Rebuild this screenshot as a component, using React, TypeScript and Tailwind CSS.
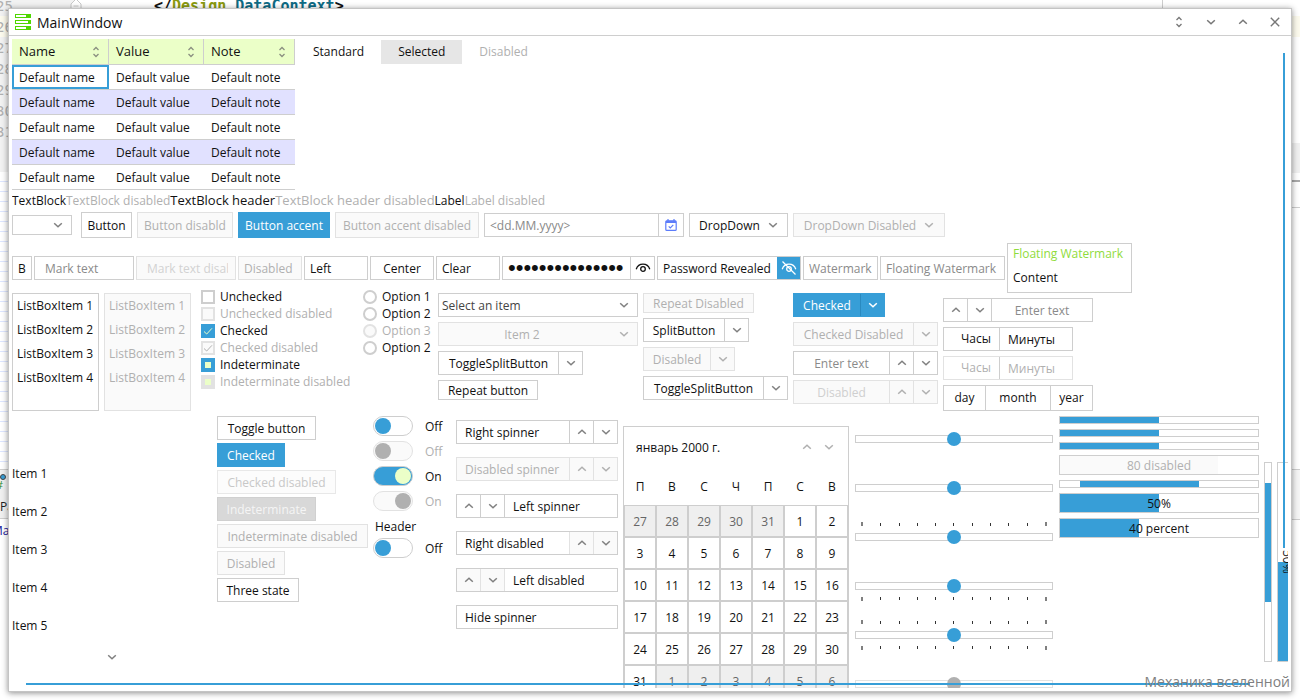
import React from "react";

type Item = { text: string; disabled?: boolean };

const box = "border border-[#cecece] bg-white";
const boxDisabled = "border border-[#e2e2e2] bg-[#fafafa] text-[#b0b0b0]";
const boxAccent = "border border-[#379ed7] bg-[#379ed7] text-white font-medium";

const Chevron: React.FC<{ up?: boolean; className?: string }> = ({ up, className = "" }) => (
    <svg
        className={`w-[10px] h-[10px] shrink-0 ${className}`}
        viewBox="0 0 10 10"
        fill="none"
        stroke="currentColor"
        strokeWidth={1.5}
    >
        <path d={up ? "M1.2 6.8L5 3.2l3.8 3.6" : "M1.2 3.2L5 6.8l3.8-3.6"} />
    </svg>
);

const SortIcon: React.FC<{ className?: string }> = ({ className = "" }) => (
    <svg className={`w-2 h-3 ${className}`} viewBox="0 0 8 12" fill="none" stroke="currentColor" strokeWidth={1.3}>
        <path d="M1.5 4L4 1.5 6.5 4M1.5 8L4 10.5 6.5 8" />
    </svg>
);

const Logo: React.FC = () => (
    <svg className="w-4 h-4" viewBox="0 0 16 16" fill="#4fd600">
        <path d="M0 0h16v4H0zM1 1v2h10V1z" fillRule="evenodd" />
        <path d="M0 6h16v4H0zM1 7v2h12V7z" fillRule="evenodd" />
        <path d="M0 12h16v4H0zM1 13v2h10v-2z" fillRule="evenodd" />
    </svg>
);

const Eye: React.FC<{ off?: boolean }> = ({ off }) => (
    <svg className="w-4 h-4" viewBox="0 0 16 16" fill="none" stroke="currentColor" strokeWidth={1.3}>
        <path d="M1.2 9.2C2.4 5.800 5 4.200 8 4.200s5.600 1.600 6.800 5" />
        <circle cx="8" cy="9" r="2.300" />
        {off && <path d="M1.500 1.500l13 13" />}
    </svg>
);

const CalendarIcon: React.FC = () => (
    <svg className="w-3 h-3" viewBox="0 0 12 12" fill="none" stroke="#5c7cfa" strokeWidth={1.2}>
        <rect x="0.8" y="1.800" width="10.400" height="9.600" rx="1" />
        <path d="M1 2.900h10" strokeWidth={2.200} />
        <path d="M3 0v2M9 0v2M3.700 7.300l1.600 1.600 3-3" />
    </svg>
);

const Btn: React.FC<{ children: React.ReactNode; look?: string; className?: string; disabled?: boolean }> = ({
    children,
    look,
    className = "",
    disabled,
}) => (
    <button
        type="button"
        disabled={disabled}
        className={`shrink-0 flex items-center justify-center ${look ?? (disabled ? boxDisabled : box)} ${className}`}
    >
        {children}
    </button>
);

const SplitButton: React.FC<{ text: string; className: string; accent?: boolean; disabled?: boolean }> = ({
    text,
    className,
    accent,
    disabled,
}) => (
    <div className={`flex h-6 ${accent ? boxAccent : disabled ? boxDisabled : box} ${className}`}>
        <button type="button" disabled={disabled} className="flex-1">
            {text}
        </button>
        <button
            type="button"
            disabled={disabled}
            aria-label={`${text} menu`}
            className={`w-6 flex items-center justify-center border-l ${
                accent ? "border-[#2a8ac0] text-white" : disabled ? "border-[#e2e2e2]" : "border-[#cecece] text-[#808080]"
            }`}
        >
            <Chevron />
        </button>
    </div>
);

type SpinnerProps = {
    label: string;
    value?: string;
    placeholder?: string;
    left?: boolean;
    disabled?: boolean;
    lockButtons?: boolean;
    noButtons?: boolean;
    className: string;
    inputClass?: string;
};

const Spinner: React.FC<SpinnerProps> = (p) => {
    const locked = p.disabled || p.lockButtons;
    const side = p.left ? "border-r" : "border-l";
    const look = locked ? "border-[#e2e2e2] bg-[#fafafa]" : "border-[#cecece]";
    const color = p.disabled ? "text-[#b0b0b0]" : "text-[#808080]";
    const buttons = !p.noButtons && (
        <div className={`flex ${color}`}>
            <button type="button" disabled={locked} aria-label="Increase" className={`w-6 grid place-items-center ${side} ${look}`}>
                <Chevron up />
            </button>
            <button type="button" disabled={locked} aria-label="Decrease" className={`w-6 grid place-items-center ${side} ${look}`}>
                <Chevron />
            </button>
        </div>
    );

    return (
        <div className={`flex h-6 ${p.disabled ? boxDisabled : box} ${p.className}`}>
            {p.left && buttons}
            <input
                type="text"
                aria-label={p.label}
                defaultValue={p.value}
                placeholder={p.placeholder}
                disabled={p.disabled}
                className={`flex-1 min-w-0 px-2 outline-none placeholder:text-[#8a8a8a] disabled:placeholder:text-[#cfcfcf] ${p.inputClass ?? ""}`}
            />
            {!p.left && buttons}
        </div>
    );
};

const TextInput: React.FC<{ label: string; value?: string; placeholder?: string; disabled?: boolean; className: string }> = ({
    label,
    value,
    placeholder,
    disabled,
    className,
}) => (
    <input
        type="text"
        aria-label={label}
        defaultValue={value}
        placeholder={placeholder}
        disabled={disabled}
        className={`shrink-0 h-6 outline-none placeholder:text-[#8a8a8a] disabled:placeholder:text-[#d2d2d2] ${
            disabled ? boxDisabled : box
        } ${className}`}
    />
);

const Select: React.FC<{ label: string; option: string; disabled?: boolean; className: string; selectClass?: string }> = ({
    label,
    option,
    disabled,
    className,
    selectClass = "",
}) => (
    <div className={`relative ${disabled ? boxDisabled : box} ${className}`}>
        <select
            aria-label={label}
            disabled={disabled}
            className={`appearance-none w-full h-full outline-none opacity-100 ${selectClass}`}
        >
            <option>{option}</option>
        </select>
        <Chevron className={`absolute right-2 inset-y-0 my-auto pointer-events-none ${disabled ? "" : "text-[#808080]"}`} />
    </div>
);

const Check: React.FC<{ text: string; state: "off" | "on" | "mixed"; disabled?: boolean }> = ({ text, state, disabled }) => {
    let look = disabled ? "border-2 border-[#e2e2e2] bg-[#fafafa]" : "border-2 border-[#cecece] bg-white";
    if (state !== "off" && !disabled) look = "bg-[#379ed7]";
    if (state === "mixed" && disabled) look = "bg-[#e2e2e2]";

    return (
        <label className={`flex items-center gap-[5px] h-[17px] ${disabled ? "text-[#b0b0b0]" : ""}`}>
            <span className="relative grid w-[14px] h-[14px]">
                <input
                    type="checkbox"
                    defaultChecked={state === "on"}
                    disabled={disabled}
                    ref={(el) => {
                        if (el) el.indeterminate = state === "mixed";
                    }}
                    className={`appearance-none w-[14px] h-[14px] ${look}`}
                />
                {state === "on" && (
                    <svg
                        className="absolute inset-0 pointer-events-none"
                        viewBox="0 0 14 14"
                        fill="none"
                        stroke={disabled ? "#b0b0b0" : "#ebffc8"}
                        strokeWidth={1}
                    >
                        <path d="M3 7.500l2.700 2.500L11 4.300" />
                    </svg>
                )}
                {state === "mixed" && <span className="absolute inset-1 bg-[#ebffc8] pointer-events-none" />}
            </span>
            {text}
        </label>
    );
};

const Radio: React.FC<Item> = ({ text, disabled }) => (
    <label className={`flex items-center gap-[5px] h-[17px] ${disabled ? "text-[#b0b0b0]" : ""}`}>
        <input
            type="radio"
            name="options"
            disabled={disabled}
            className={`appearance-none w-[14px] h-[14px] rounded-full border-2 ${
                disabled ? "border-[#e2e2e2] bg-[#fafafa]" : "border-[#cecece] bg-white"
            }`}
        />
        {text}
    </label>
);

const Switch: React.FC<{ on?: boolean; disabled?: boolean }> = ({ on, disabled }) => {
    const track = disabled ? "border-[#e2e2e2] bg-[#fafafa]" : on ? "border-[#cecece] bg-[#379ed7]" : "border-[#cecece] bg-white";
    const knob = disabled ? "bg-[#b0b0b0]" : on ? "bg-[#ebffc8]" : "bg-[#379ed7]";

    return (
        <label className={`flex items-center gap-3 h-5 ${disabled ? "text-[#b0b0b0]" : ""}`}>
            <span className="relative flex">
                <input
                    type="checkbox"
                    role="switch"
                    defaultChecked={on}
                    disabled={disabled}
                    className={`appearance-none w-10 h-5 rounded-full border ${track}`}
                />
                <span className={`absolute top-[2px] w-4 h-4 rounded-full pointer-events-none ${on ? "right-[2px]" : "left-[2px]"} ${knob}`} />
            </span>
            {on ? "On" : "Off"}
        </label>
    );
};

const Ticks: React.FC<{ show?: boolean; below?: boolean }> = ({ show, below }) => (
    <div className={`flex justify-between h-1 px-[6px] ${below ? "items-start" : "items-end"}`}>
        {show &&
            Array.from({ length: 11 }, (_, i) => (
                <span key={i} className={i % 10 === 0 ? "w-[2px] h-1 bg-[#808080]" : "w-px h-[3px] bg-[#333]"} />
            ))}
    </div>
);

const Slider: React.FC<{ above?: boolean; below?: boolean; disabled?: boolean }> = ({ above, below, disabled }) => (
    <div className="flex flex-col gap-1 h-[49px] pt-[9px]">
        <Ticks show={above} />
        <input
            type="range"
            aria-label="Slider"
            defaultValue={50}
            disabled={disabled}
            className="appearance-none w-full h-[14px] shrink-0 bg-transparent [&::-webkit-slider-runnable-track]:h-2 [&::-webkit-slider-runnable-track]:border [&::-webkit-slider-runnable-track]:border-[#cecece] disabled:[&::-webkit-slider-runnable-track]:border-[#e2e2e2] [&::-webkit-slider-thumb]:appearance-none [&::-webkit-slider-thumb]:w-[14px] [&::-webkit-slider-thumb]:h-[14px] [&::-webkit-slider-thumb]:-mt-1 [&::-webkit-slider-thumb]:rounded-full [&::-webkit-slider-thumb]:bg-[#379ed7] disabled:[&::-webkit-slider-thumb]:bg-[#b0b0b0]"
        />
        <Ticks show={below} below />
    </div>
);

const Progress: React.FC<{ value: number; offset?: number; text?: string; disabled?: boolean }> = ({
    value,
    offset = 0,
    text,
    disabled,
}) => (
    <div
        role="progressbar"
        aria-valuenow={value}
        className={`relative ${box} ${text ? "h-5" : "h-2"} ${disabled ? "text-[#b0b0b0]" : ""}`}
    >
        <div
            className={`h-full ${disabled ? "bg-[#fafafa]" : "bg-[#379ed7]"}`}
            style={{ width: `${value}%`, marginLeft: `${offset}%` }}
        />
        {text && <span className="absolute inset-0 flex items-center justify-center">{text}</span>}
    </div>
);

const DataTable: React.FC = () => {
    const heads = [
        { text: "Name", width: "w-[97px]" },
        { text: "Value", width: "w-[95px]" },
        { text: "Note", width: "w-[91px]" },
    ];

    return (
        <table className="border-separate border-spacing-0 table-fixed w-[283px] shrink-0 text-left">
            <thead>
                <tr>
                    {heads.map((h) => (
                        <th
                            key={h.text}
                            className={`h-[26px] p-0 pl-[7px] pr-2 text-[13px] font-normal bg-[#ebffc8] border-r border-b border-[#cecece] ${h.width}`}
                        >
                            <span className="flex items-center justify-between">
                                {h.text}
                                <SortIcon className="text-[#8a8f80]" />
                            </span>
                        </th>
                    ))}
                </tr>
            </thead>
            <tbody>
                {[0, 1, 2, 3, 4].map((row) => (
                    <tr key={row} className={row % 2 ? "bg-[#e1e1ff]" : ""}>
                        {["name", "value", "note"].map((col, i) => (
                            <td
                                key={col}
                                className={`h-[25px] p-0 pl-[7px] border-b border-[#cecece] ${
                                    row === 0 && i === 0 ? "shadow-[inset_0_0_0_2px_#379ed7]" : ""
                                }`}
                            >
                                Default {col}
                            </td>
                        ))}
                    </tr>
                ))}
            </tbody>
        </table>
    );
};

const MonthView: React.FC = () => {
    const days = Array.from({ length: 42 }, (_, i) => {
        if (i < 5) return { n: 27 + i, out: true };
        if (i < 36) return { n: i - 4, out: false };
        return { n: i - 35, out: true };
    });
    const weeks = [0, 1, 2, 3, 4, 5].map((w) => days.slice(w * 7, w * 7 + 7));

    return (
        <div className={`w-[226px] ${box}`}>
            <div className="flex items-center h-10 pl-3 pr-[14px]">
                <span className="flex-1">январь 2000 г.</span>
                <span className="flex gap-3 text-[#b0b0b0]">
                    <button type="button" aria-label="Previous month">
                        <Chevron up />
                    </button>
                    <button type="button" aria-label="Next month">
                        <Chevron />
                    </button>
                </span>
            </div>
            <table className="border-separate border-spacing-0 table-fixed w-full text-center">
                <thead>
                    <tr>
                        {["П", "В", "С", "Ч", "П", "С", "В"].map((d, i) => (
                            <th key={i} className="h-[38px] p-0 font-normal">
                                {d}
                            </th>
                        ))}
                    </tr>
                </thead>
                <tbody>
                    {weeks.map((week, w) => (
                        <tr key={w}>
                            {week.map((d) => (
                                <td
                                    key={d.n}
                                    className={`h-8 p-0 border border-[#cecece] ${d.out ? "bg-[#efefef] text-[#666]" : ""}`}
                                >
                                    {d.n}
                                </td>
                            ))}
                        </tr>
                    ))}
                </tbody>
            </table>
        </div>
    );
};

// editor window that is partly visible behind the main one
const Backdrop: React.FC = () => (
    <div className="absolute inset-0 overflow-hidden bg-white" aria-hidden="true">
        <div className="absolute left-0 top-0 w-[76px] h-[172px] bg-[#f2f2f2]" />
        <div className="absolute inset-x-0 top-4 h-[21px] bg-[#fcfaed]" />
        <div className="absolute -left-1 -top-1 font-['DejaVu_Sans_Mono'] text-[14px] leading-[21px] text-[#b0b0b0]">
            {[25, 26, 27, 28, 29, 30, 31].map((n) => (
                <div key={n}>{n}</div>
            ))}
        </div>
        <svg className="absolute left-[70px] top-0 w-3 h-2" viewBox="0 0 12 8" fill="white" stroke="#c8c8c8">
            <path d="M1 8V4l5-5 5 5v4M3.500 6h5" />
        </svg>
        <div className="absolute left-[154px] -top-1 font-['DejaVu_Sans_Mono'] font-bold text-[15px] leading-5 text-[#111]">
            &lt;/<span className="text-[#8a9a10]">Design</span>.<span className="text-[#0f6b85]">DataContext</span>&gt;
        </div>
        <div className="absolute left-[1162px] top-0 w-px h-2 bg-[#cecece]" />
        <div className="absolute left-0 top-[172px] w-2 h-[298px] bg-[repeating-linear-gradient(#fff_0_9px,#dde6ff_9px_10px)]" />
        <div className="absolute left-0 top-[469px] w-2 h-[50px] border-y border-[#cecece] bg-[#f0f0f0] leading-[17px] text-[#222]">
            <div className="w-[6px] h-[6px] mt-1 rounded-full border border-[#444] bg-[#379ed7]" />
            <div className="-ml-1 text-[11px] leading-[10px] text-[#2c8a2c]">#</div>
            <div className="w-2 mt-2 overflow-hidden">Pa</div>
        </div>
        <div className="absolute -left-2 top-[522px] w-4 overflow-hidden text-[#1a1a9a]">Ma</div>
        <div className="absolute right-0 top-[143px] w-2 h-[30px] bg-[#f0f0f0]" />
        <div className="absolute right-0 top-[180px] w-2 h-7 border-t-2 border-b border-t-[#aaa] border-b-[#cecece]" />
        <div className="absolute right-0 top-[469px] w-2 h-[51px] border-b border-t border-[#cecece] bg-[#f5f5f5]" />
    </div>
);

const checks: { text: string; state: "off" | "on" | "mixed"; disabled?: boolean }[] = [
    { text: "Unchecked", state: "off" },
    { text: "Unchecked disabled", state: "off", disabled: true },
    { text: "Checked", state: "on" },
    { text: "Checked disabled", state: "on", disabled: true },
    { text: "Indeterminate", state: "mixed" },
    { text: "Indeterminate disabled", state: "mixed", disabled: true },
];

const radios: Item[] = [{ text: "Option 1" }, { text: "Option 2" }, { text: "Option 3", disabled: true }, { text: "Option 2" }];

const App: React.FC = () => (
    <div className="relative h-screen min-h-[600px] p-2 overflow-hidden font-['Open_Sans','Noto_Sans',sans-serif] text-[12px] leading-[17px] text-[#111] whitespace-nowrap">
        <Backdrop />
        <div className="relative flex flex-col h-full bg-white border border-[#c4c4c4] shadow-[0_1px_6px_rgba(0,0,0,0.45)]">
            <header className="flex items-center shrink-0 h-[27px] pl-[6px] pr-[10px] border-b border-[#cecece]">
                <Logo />
                <h1 className="flex-1 ml-[6px] text-[14px]">MainWindow</h1>
                <div className="flex gap-5 text-[#777]">
                    <button type="button" aria-label="Float" className="w-3 grid place-items-center">
                        <SortIcon />
                    </button>
                    <button type="button" aria-label="Minimize" className="w-3 grid place-items-center">
                        <Chevron />
                    </button>
                    <button type="button" aria-label="Maximize" className="w-3 grid place-items-center">
                        <Chevron up />
                    </button>
                    <button type="button" aria-label="Close" className="w-3 grid place-items-center">
                        <svg className="w-[10px] h-[10px]" viewBox="0 0 10 10" stroke="currentColor" strokeWidth={1.4}>
                            <path d="M0.800 0.800l8.400 8.400M9.200 0.800L0.800 9.200" />
                        </svg>
                    </button>
                </div>
            </header>

            <main className="flex-1 min-h-0 m-[3px] overflow-hidden">
                <section className="flex">
                    <DataTable />
                    <ul className="flex items-center h-[26px] ml-px">
                        <li className="px-[17px] leading-6">Standard</li>
                        <li className="px-[17px] leading-6 bg-[#e6e6e6]">Selected</li>
                        <li className="px-[17px] leading-6 text-[#b0b0b0]">Disabled</li>
                    </ul>
                </section>

                <section className="flex items-center h-5">
                    <span>TextBlock</span>
                    <span className="text-[#b0b0b0]">TextBlock disabled</span>
                    <span className="text-[13px]">TextBlock header</span>
                    <span className="text-[13px] text-[#b0b0b0]">TextBlock header disabled</span>
                    <span>Label</span>
                    <span className="text-[#b0b0b0]">Label disabled</span>
                </section>

                <section className="flex items-center gap-[5px] h-[26px] mt-[2px]">
                    <Select label="Empty" option="" className="w-[60px] h-5 mr-1" />
                    <Btn className="w-[51px] h-[26px]">Button</Btn>
                    <Btn className="w-24 h-[26px]" disabled>
                        Button disabld
                    </Btn>
                    <Btn className="w-[92px] h-[26px]" look={boxAccent}>
                        Button accent
                    </Btn>
                    <Btn className="w-36 h-[26px]" disabled>
                        Button accent disabled
                    </Btn>
                    <div className={`flex w-[200px] h-6 ${box}`}>
                        <input
                            type="text"
                            aria-label="Date"
                            placeholder="<dd.MM.yyyy>"
                            className="flex-1 min-w-0 px-[5px] outline-none placeholder:text-[#8a8a8a]"
                        />
                        <button
                            type="button"
                            aria-label="Open calendar"
                            className="w-[25px] grid place-items-center border-l border-[#cecece]"
                        >
                            <CalendarIcon />
                        </button>
                    </div>
                    <Btn className="w-[99px] h-6 gap-2">
                        DropDown <Chevron className="text-[#808080]" />
                    </Btn>
                    <Btn className="w-[152px] h-6 gap-2" disabled>
                        DropDown Disabled <Chevron />
                    </Btn>
                </section>

                <section className="flex items-center gap-[2px] h-[50px] mt-[5px]">
                    <Btn className="w-5 h-6">B</Btn>
                    <TextInput label="Mark text" placeholder="Mark text" className="w-[100px] px-[10px]" />
                    <TextInput label="Mark text disabled" placeholder="Mark text disabled" disabled className="w-[100px] pl-[10px] pr-[7px]" />
                    <TextInput label="Disabled" value="Disabled" disabled className="w-16 px-[5px]" />
                    <TextInput label="Left" value="Left" className="w-16 px-[5px]" />
                    <TextInput label="Center" value="Center" className="w-16 px-[5px] text-center" />
                    <TextInput label="Clear" value="Clear" className="w-16 px-[5px]" />
                    <div className={`flex shrink-0 w-[153px] h-6 ${box}`}>
                        <input
                            type="password"
                            aria-label="Password"
                            defaultValue="passwordpasswor"
                            className="flex-1 min-w-0 pl-[5px] outline-none font-['Liberation_Sans'] text-[22px]"
                        />
                        <button type="button" aria-label="Show password" className="w-6 grid place-items-center border-l border-[#cecece]">
                            <Eye />
                        </button>
                    </div>
                    <div className={`flex shrink-0 w-[144px] h-6 ${box}`}>
                        <input
                            type="text"
                            aria-label="Revealed password"
                            defaultValue="Password Revealed"
                            className="flex-1 min-w-0 pl-[5px] outline-none"
                        />
                        <button type="button" aria-label="Hide password" className="w-[23px] grid place-items-center bg-[#379ed7] text-white">
                            <Eye off />
                        </button>
                    </div>
                    <TextInput label="Watermark" placeholder="Watermark" className="w-[75px] px-[5px]" />
                    <TextInput label="Floating watermark" placeholder="Floating Watermark" className="w-[125px] px-[5px]" />
                    <label className={`flex flex-col shrink-0 gap-[7px] w-[125px] h-[50px] px-[5px] pt-px ${box}`}>
                        <span className="text-[#8fdc3c]">Floating Watermark</span>
                        <input type="text" defaultValue="Content" className="w-full outline-none" />
                    </label>
                </section>

                <section className="flex items-start h-[123px] -mt-[5px]">
                    <ul className={`w-[87px] h-[118px] mt-[5px] px-1 leading-6 ${box}`}>
                        {[1, 2, 3, 4].map((n) => (
                            <li key={n}>ListBoxItem {n}</li>
                        ))}
                    </ul>
                    <ul className={`w-[87px] h-[118px] mt-[5px] ml-[5px] px-1 leading-6 ${boxDisabled}`}>
                        {[1, 2, 3, 4].map((n) => (
                            <li key={n}>ListBoxItem {n}</li>
                        ))}
                    </ul>
                    <div className="w-[162px] ml-[10px]">
                        {checks.map((c) => (
                            <Check key={c.text} {...c} />
                        ))}
                    </div>
                    <div className="w-[75px]">
                        {radios.map((r, i) => (
                            <Radio key={i} {...r} />
                        ))}
                    </div>
                    <div className="flex flex-col items-start gap-[5px] w-[200px] mt-[5px]">
                        <Select label="Item" option="Select an item" className="w-full h-6" selectClass="pl-[3px] text-[#444]" />
                        <Select
                            label="Disabled item"
                            option="Item 2"
                            disabled
                            className="w-full h-6"
                            selectClass="pr-8 [text-align-last:center]"
                        />
                        <SplitButton text="ToggleSplitButton" className="w-[145px]" />
                        <Btn className="w-[100px] h-5">Repeat button</Btn>
                    </div>
                    <div className="flex flex-col items-start gap-[5px] w-[145px] mt-[5px] ml-[5px]">
                        <Btn className="w-[111px] h-5" disabled>
                            Repeat Disabled
                        </Btn>
                        <SplitButton text="SplitButton" className="w-[106px]" />
                        <SplitButton text="Disabled" className="w-[92px]" disabled />
                        <SplitButton text="ToggleSplitButton" className="w-[145px]" />
                    </div>
                    <div className="flex flex-col items-start gap-[5px] w-[145px] mt-[5px] ml-[5px]">
                        <SplitButton text="Checked" className="w-[92px]" accent />
                        <SplitButton text="Checked Disabled" className="w-full" disabled />
                        <Spinner label="Number" placeholder="Enter text" className="w-full" inputClass="text-center" />
                        <Spinner label="Disabled number" placeholder="Disabled" className="w-full" inputClass="text-center" disabled />
                    </div>
                    <div className="flex flex-col items-start gap-[5px] w-[150px] mt-[10px] ml-[5px]">
                        <Spinner label="Left number" placeholder="Enter text" className="w-full" inputClass="text-center" left />
                        <button type="button" className={`flex items-center w-[130px] h-6 text-left ${box}`}>
                            <span className="w-14 pr-2 leading-[22px] text-right border-r border-[#cecece]">Часы</span>
                            <span className="pl-2">Минуты</span>
                        </button>
                        <button type="button" disabled className="flex items-center w-[130px] h-6 text-left border border-[#e2e2e2] text-[#b0b0b0]">
                            <span className="w-14 pr-2 leading-[22px] text-right border-r border-[#cecece]">Часы</span>
                            <span className="pl-2">Минуты</span>
                        </button>
                        <button type="button" className={`flex w-full h-[26px] leading-6 ${box}`}>
                            <span className="w-[42px] border-r border-[#cecece]">day</span>
                            <span className="w-[65px] border-r border-[#cecece]">month</span>
                            <span className="flex-1">year</span>
                        </button>
                    </div>
                </section>

                <section className="flex items-center [&>*]:shrink-0">
                    <div className="self-start flex flex-col w-[200px] pt-11">
                        {[1, 2, 3, 4, 5].map((n) => (
                            <div key={n} className="leading-[38px]">
                                Item {n}
                            </div>
                        ))}
                        <button type="button" aria-label="Next page" className="h-6 grid place-items-center text-[#808080]">
                            <Chevron />
                        </button>
                    </div>
                    <div className="self-start flex flex-col items-start gap-[3px] w-[151px] pt-[5px] ml-[5px]">
                        <Btn className="w-[99px] h-6">Toggle button</Btn>
                        <Btn className="w-[68px] h-6" look={boxAccent}>
                            Checked
                        </Btn>
                        <Btn className="w-[119px] h-6" look="border border-[#e8e8e8] bg-[#fcfcfc] text-[#c8c8c8]" disabled>
                            Checked disabled
                        </Btn>
                        <Btn className="w-[99px] h-6" look="bg-[#d8d8d8] border border-[#d0d0d0] text-[#f5f5f5]">
                            Indeterminate
                        </Btn>
                        <Btn className="w-[151px] h-6" disabled>
                            Indeterminate disabled
                        </Btn>
                        <Btn className="w-[68px] h-6" disabled>
                            Disabled
                        </Btn>
                        <Btn className="w-[82px] h-6">Three state</Btn>
                    </div>
                    <div className="self-start flex flex-col gap-[5px] w-[83px] pt-[5px] ml-[5px]">
                        <Switch />
                        <Switch disabled />
                        <Switch on />
                        <Switch on disabled />
                        <div>
                            <div className="pl-[2px] leading-[22px]">Header</div>
                            <Switch />
                        </div>
                    </div>
                    <div className="self-start flex flex-col gap-[13px] w-[162px] pt-[9px]">
                        <Spinner label="Right spinner" value="Right spinner" className="w-full" />
                        <Spinner label="Disabled spinner" value="Disabled spinner" className="w-full" disabled />
                        <Spinner label="Left spinner" value="Left spinner" className="w-full" left />
                        <Spinner label="Right disabled" value="Right disabled" className="w-full" lockButtons />
                        <Spinner label="Left disabled" value="Left disabled" className="w-full" left lockButtons />
                        <Spinner label="Hide spinner" value="Hide spinner" className="w-full" noButtons />
                    </div>
                    <div className="ml-[5px]">
                        <MonthView />
                    </div>
                    <div className="w-[198px] py-1 ml-[6px]">
                        <Slider />
                        <Slider />
                        <Slider above />
                        <Slider below />
                        <Slider above below />
                        <Slider disabled />
                    </div>
                    <div className="self-start flex flex-col gap-[5px] w-[200px] pt-[5px] ml-[6px]">
                        <Progress value={50} />
                        <Progress value={50} />
                        <Progress value={50} />
                        <Progress value={80} text="80 disabled" disabled />
                        <Progress value={60} offset={10} />
                        <Progress value={50} text="50%" />
                        <Progress value={40} text="40 percent" />
                    </div>
                    <div role="progressbar" className={`w-2 h-[200px] ml-[5px] ${box}`}>
                        <div className="h-[60%] mt-5 bg-[#379ed7]" />
                    </div>
                    <div role="progressbar" aria-valuenow={50} className={`relative flex items-end w-5 h-[200px] ml-[5px] ${box}`}>
                        <div className="w-full h-1/2 bg-[#379ed7]" />
                        <span className="absolute inset-0 flex items-center justify-center [writing-mode:vertical-rl]">50%</span>
                    </div>
                </section>
            </main>

            {/* collapsed scroll bars */}
            <div className="absolute right-[6px] top-11 w-[2px] h-[495px] bg-[#379ed7]" />
            <div className="absolute left-[17px] right-[41px] bottom-[6px] h-[2px] bg-[#379ed7]" />
            <div className="absolute right-px bottom-px text-[14px] text-[#808080]">Механика вселенной</div>
        </div>
    </div>
);

export default App;
